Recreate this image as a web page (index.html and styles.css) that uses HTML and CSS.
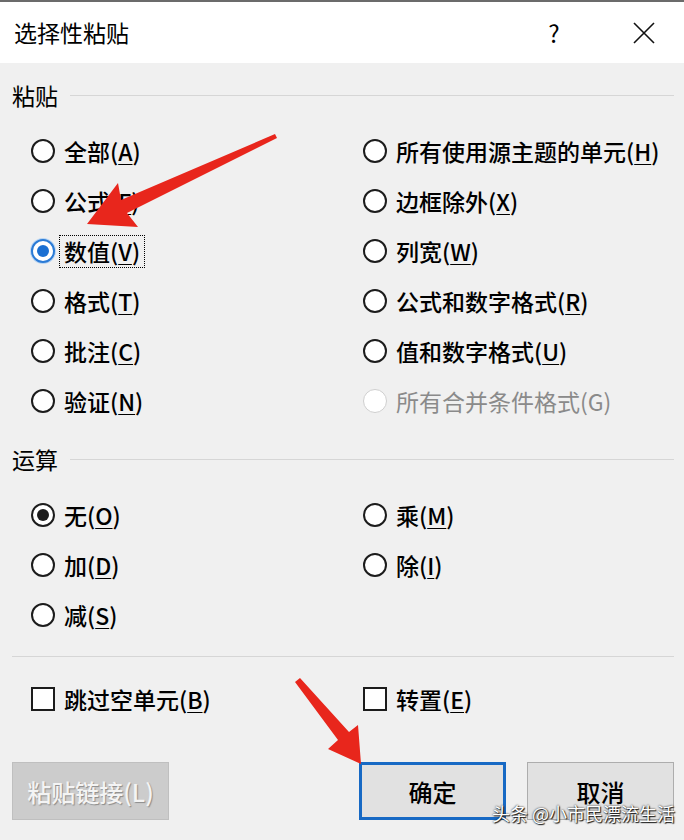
FILE: index.html
```html
<!DOCTYPE html>
<html lang="zh-CN">
  <head>
    <meta charset="UTF-8" />
    <meta name="viewport" content="width=device-width, initial-scale=1.0" />
    <title>选择性粘贴</title>
    <link rel="stylesheet" href="styles.css">
  </head>
  <body>
    <div class="dialog">
      <div class="titlebar">
        <span class="title">选择性粘贴</span>
        <div class="controls">
          <span class="help">?</span>
          <span class="close">
            <svg width="22" height="22" viewBox="0 0 22 22">
              <path d="M1 1 L21 21 M21 1 L1 21" stroke="#111" stroke-width="1.6" fill="none" />
            </svg>
          </span>
        </div>
      </div>

      <div class="content">
        <!-- 粘贴 -->
        <div class="group-head">
          <span class="group-label">粘贴</span>
          <span class="rule"></span>
        </div>
        <div class="options">
          <label class="opt"><span class="radio"></span><span class="text">全部(<u>A</u>)</span></label>
          <label class="opt"><span class="radio"></span><span class="text">所有使用源主题的单元(<u>H</u>)</span></label>
          <label class="opt"><span class="radio"></span><span class="text">公式(<u>F</u>)</span></label>
          <label class="opt"><span class="radio"></span><span class="text">边框除外(<u>X</u>)</span></label>
          <label class="opt"><span class="radio checked-blue"></span><span class="text focused">数值(<u>V</u>)</span></label>
          <label class="opt"><span class="radio"></span><span class="text">列宽(<u>W</u>)</span></label>
          <label class="opt"><span class="radio"></span><span class="text">格式(<u>T</u>)</span></label>
          <label class="opt"><span class="radio"></span><span class="text">公式和数字格式(<u>R</u>)</span></label>
          <label class="opt"><span class="radio"></span><span class="text">批注(<u>C</u>)</span></label>
          <label class="opt"><span class="radio"></span><span class="text">值和数字格式(<u>U</u>)</span></label>
          <label class="opt"><span class="radio"></span><span class="text">验证(<u>N</u>)</span></label>
          <label class="opt disabled"><span class="radio"></span><span class="text">所有合并条件格式(G)</span></label>
        </div>

        <!-- 运算 -->
        <div class="group-head second">
          <span class="group-label">运算</span>
          <span class="rule"></span>
        </div>
        <div class="options">
          <label class="opt"><span class="radio checked"></span><span class="text">无(<u>O</u>)</span></label>
          <label class="opt"><span class="radio"></span><span class="text">乘(<u>M</u>)</span></label>
          <label class="opt"><span class="radio"></span><span class="text">加(<u>D</u>)</span></label>
          <label class="opt"><span class="radio"></span><span class="text">除(<u>I</u>)</span></label>
          <label class="opt"><span class="radio"></span><span class="text">减(<u>S</u>)</span></label>
        </div>

        <div class="separator"></div>

        <div class="options checks">
          <label class="opt"><span class="checkbox"></span><span class="text">跳过空单元(<u>B</u>)</span></label>
          <label class="opt"><span class="checkbox"></span><span class="text">转置(<u>E</u>)</span></label>
        </div>

        <div class="buttons">
          <button class="btn btn-disabled">粘贴链接(L)</button>
          <div class="btn-group">
            <button class="btn btn-default">确定</button>
            <button class="btn">取消</button>
          </div>
        </div>
      </div>
    </div>

    <!-- 红色箭头 -->
    <svg class="arrows" width="684" height="840" viewBox="0 0 684 840">
      <polygon fill="#e8261c" points="87,224 138,227 127,213 277,138 275,134 121,200 118,183" />
      <polygon fill="#e8261c" points="361,764 328,749 338,740 295,682 300,678 349,732 358,725" />
    </svg>

    <div class="watermark">头条 @小市民漂流生活</div>
  </body>
</html>
```

FILE: styles.css
```css
body {
  margin: 0;
  background: #f0f0f0;
  font-family: "Microsoft YaHei", "Noto Sans CJK SC", sans-serif;
  color: #000;
  width: 684px;
  height: 840px;
  overflow: hidden;
  position: relative;
}

.dialog {
  border-top: 2px solid #6b6b6b;
}

.titlebar {
  height: 61px;
  background: #fff;
  display: flex;
  align-items: center;
  padding: 0 20px 0 14px;
}

.title {
  font-size: 23px;
  line-height: 1;
}

.controls {
  margin-left: auto;
  display: flex;
  align-items: center;
  gap: 50px;
}

.help {
  width: 40px;
  text-align: center;
  font-size: 24px;
  line-height: 1;
}

.close {
  width: 40px;
  height: 22px;
  display: flex;
  justify-content: center;
}

.content {
  padding: 0 10px 0 12px;
}

.group-head {
  display: flex;
  align-items: center;
  height: 36px;
  margin-top: 14px;
}

.group-head.second {
  margin-top: 15px;
}

.group-label {
  font-size: 23px;
  line-height: 1;
}

.rule {
  flex: 1;
  height: 1px;
  background: #d6d6d6;
  margin-left: 12px;
}

.options {
  display: grid;
  grid-template-columns: 332px 1fr;
  grid-auto-rows: 50px;
  padding-left: 19px;
  margin-top: 13px;
}

.opt {
  display: flex;
  align-items: center;
  gap: 9px;
  font-size: 23px;
  font-weight: 500;
  line-height: 1;
}

.opt u {
  text-underline-offset: 3px;
  text-decoration-thickness: 1px;
}

.radio {
  width: 24px;
  height: 24px;
  box-sizing: border-box;
  border: 2px solid #1c1c1c;
  border-radius: 50%;
  background: #fff;
  display: flex;
  align-items: center;
  justify-content: center;
  flex-shrink: 0;
}

.radio.checked::after,
.radio.checked-blue::after {
  content: "";
  width: 12px;
  height: 12px;
  border-radius: 50%;
  background: #1c1c1c;
}

.radio.checked-blue {
  border-color: #2b7bd6;
  box-shadow: 0 0 0 1px #b9d5f3;
}

.radio.checked-blue::after {
  background: #1a6fd2;
}

.text.focused {
  outline: 1px dotted #000;
  outline-offset: 4px;
}

.disabled .radio {
  border-color: #cfcfcf;
  border-width: 1.5px;
}

.disabled .text {
  color: #8a8a8a;
  font-weight: normal;
}

.separator {
  height: 1px;
  background: #d6d6d6;
  margin-top: 16px;
}

.checks {
  margin-top: 17px;
}

.checkbox {
  width: 24px;
  height: 24px;
  box-sizing: border-box;
  border: 2px solid #1c1c1c;
  background: #fff;
  flex-shrink: 0;
}

.buttons {
  display: flex;
  margin-top: 38px;
}

.btn-group {
  margin-left: auto;
  display: flex;
  gap: 21px;
}

.btn {
  width: 147px;
  height: 58px;
  font-family: inherit;
  font-size: 24px;
  font-weight: 500;
  background: #e1e1e1;
  border: 1px solid #adadad;
  color: #000;
  padding: 0;
}

.btn-default {
  border: 3px solid #1769c4;
}

.btn-disabled {
  width: 157px;
  background: #cccccc;
  border-color: #bfbfbf;
  color: #f4f4f4;
  text-shadow: 1px 1px 1px #8c8c8c;
}

.arrows {
  position: absolute;
  top: 0;
  left: 0;
  pointer-events: none;
}

.watermark {
  position: absolute;
  left: 492px;
  top: 803px;
  font-size: 18px;
  line-height: 1.2;
  white-space: nowrap;
  color: #fff;
  text-shadow: 0 0 2px #000, 1px 1px 1px #222;
}
```
